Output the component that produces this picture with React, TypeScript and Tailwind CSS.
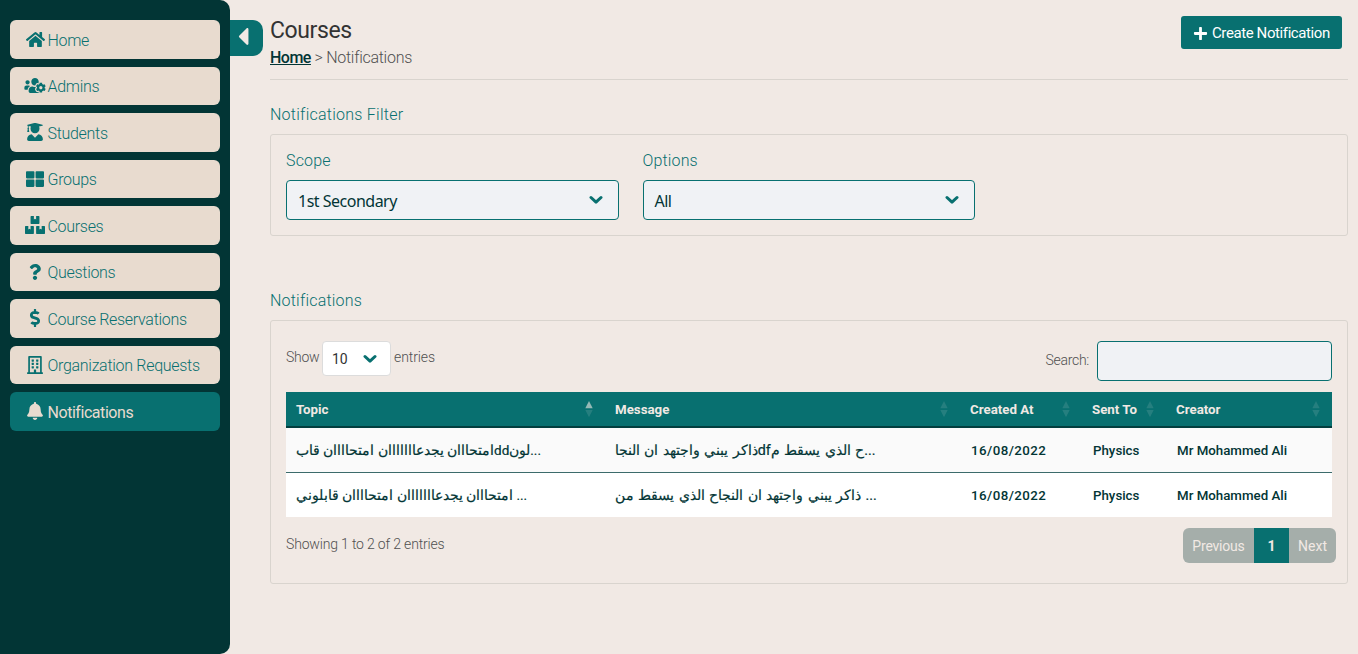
import { FaHome, FaUsersCog, FaUserGraduate, FaThLarge, FaBoxes, FaQuestion, FaDollarSign, FaRegBuilding, FaBell, FaCaretLeft, FaPlus } from "react-icons/fa";

const nav = [
  { label: "Home", icon: <FaHome className="size-[19px]" /> },
  { label: "Admins", icon: <FaUsersCog className="h-[17px] w-[22px]" /> },
  { label: "Students", icon: <FaUserGraduate className="h-[18px] w-4" /> },
  { label: "Groups", icon: <FaThLarge className="size-[18px]" /> },
  { label: "Courses", icon: <FaBoxes className="h-[18px] w-5" /> },
  { label: "Questions", icon: <FaQuestion className="h-[18px] w-3" /> },
  { label: "Course Reservations", icon: <FaDollarSign className="h-[18px] w-3" /> },
  { label: "Organization Requests", icon: <FaRegBuilding className="h-[18px] w-4" /> },
  { label: "Notifications", icon: <FaBell className="h-[18px] w-4" />, active: true },
];

function Chevron() {
  return (
    <svg viewBox="0 0 14 10" className="h-[10px] w-[14px]" fill="none" stroke="#087070" strokeWidth="3" strokeLinecap="round" strokeLinejoin="round">
      <path d="M2 2.5 7 7.2 12 2.5" />
    </svg>
  );
}

function SortArrows({ ascending = false }: { ascending?: boolean }) {
  return (
    <svg viewBox="0 0 8 18" className="h-[18px] w-2" fill="#f1e9e4">
      <path d="M4 1 7.7 8.2H.3Z" opacity={ascending ? 0.6 : 0.125} />
      <path d="M4 17.2 7.7 10H.3Z" opacity="0.125" />
    </svg>
  );
}

function Field({ label, value }: { label: string; value: string }) {
  return (
    <div className="w-[332.5px]">
      <div className="h-[31px] text-base leading-6 font-light tracking-[0.15px] text-[#087070]">{label}</div>
      <div className="flex h-10 items-center justify-between rounded border border-[#087070] bg-[#f0f2f5] pr-[15px] pl-[11px] font-['Noto_Sans',sans-serif] text-base tracking-[-0.5px] text-[#023535]">
        <span className="pt-[1px]">{value}</span>
        <Chevron />
      </div>
    </div>
  );
}

const columns = ["Topic", "Message", "Created At", "Sent To", "Creator"];
const exam = `امتحااان يجدع${"ا".repeat(7)}ن امتحاااان`;
const rows = [
  [`${exam} قابddلون...`, "ذاكر يبني واجتهد ان النجاdfح الذي يسقط م...", "16/08/2022", "Physics", "Mr Mohammed Ali"],
  [`${exam} قابلوني ...`, "ذاكر يبني واجتهد ان النجاح الذي يسقط من ...", "16/08/2022", "Physics", "Mr Mohammed Ali"],
];
const cellStyles = [
  "text-[13.5px] font-normal [-webkit-text-stroke:0.2px]",
  "text-[14.3px] leading-4 pb-[2px] font-normal [word-spacing:0.9px] [-webkit-text-stroke:0.2px]",
  "pl-[1px] tracking-[0.45px]",
  "pl-[1px]",
  "pl-[1px]",
];
const grid = "grid grid-cols-[319px_355px_122px_84px_166px]";

export default function App() {
  return (
    <div className="flex h-[654px] w-[1358px] overflow-hidden bg-[#f1e9e4] font-['Roboto',sans-serif] text-[#505050]">
      <aside className="flex w-[230px] shrink-0 flex-col gap-2 rounded-r-[10px] bg-[#023535] px-[10px] pt-5">
        {nav.map((n) => (
          <div
            key={n.label}
            className={
              n.active
                ? "flex h-[38.5px] items-center rounded-md bg-[#087070] pl-[14px] text-base tracking-[-0.45px] text-[#e8dbcf]"
                : "flex h-[38.5px] items-center rounded-md bg-[#e8dbcf] pl-[14px] text-base font-light tracking-[-0.3px] text-[#087070]"
            }
          >
            <div className="flex w-[22px] justify-center">{n.icon}</div>
            <span className="ml-[1.5px] pt-[3px]">{n.label}</span>
          </div>
        ))}
      </aside>
      <div className="mt-5 flex h-9 w-[33px] shrink-0 items-center rounded-r-[10px] bg-[#087070] pl-[7px] text-[#f1e9e4]">
        <FaCaretLeft className="-mt-[3px] h-[29px] w-3" />
      </div>
      <main className="ml-[7px] w-[1078px]">
        <header className="flex h-20 justify-between border-b border-[#d9d4ce] pt-4 pr-[6px]">
          <div>
            <h1 className="pt-[1px] text-[23px] leading-7 tracking-[-0.4px] text-[#333]">Courses</h1>
            <p className="pt-[1px] text-base leading-6 font-light tracking-[-0.28px]">
              <span className="font-medium tracking-[-0.5px] text-[#023535] underline">Home</span> &gt; Notifications
            </p>
          </div>
          <button className="flex h-[33px] w-[161px] items-center rounded-[3px] bg-[#087070] pt-[1px] pl-3 text-[15px] tracking-[-0.4px] whitespace-nowrap text-white">
            <FaPlus className="mr-1 size-[15px] shrink-0" />
            Create Notification
          </button>
        </header>
        <h2 className="mt-[23px] h-[31px] text-base leading-6 font-light tracking-[0.25px] text-[#087070]">Notifications Filter</h2>
        <section className="flex h-[102px] gap-6 rounded-[3px] border border-[#d9d4ce] px-[15px] pt-[14px]">
          <Field label="Scope" value="1st Secondary" />
          <Field label="Options" value="All" />
        </section>
        <h2 className="mt-[53px] h-[31px] text-base leading-6 font-light tracking-[0.2px] text-[#087070]">Notifications</h2>
        <section className="h-[264px] rounded-[3px] border border-[#d9d4ce] px-[15px] pt-5 text-sm">
          <div className="flex h-[51px] items-start justify-between">
            <div className="flex items-center font-light">
              <span className="w-[33px] pb-[3px] tracking-[-0.3px]">Show</span>
              <div className="mx-[3px] flex h-[35px] w-[69px] items-center justify-between rounded border border-[#dcdcdc] bg-white pr-[13px] pl-[9px] font-normal text-[#333]">
                <span>10</span>
                <Chevron />
              </div>
              <span className="pb-[3px] tracking-[-0.1px]">entries</span>
            </div>
            <div className="flex items-center gap-2 font-light">
              <span className="pb-[2px] tracking-[-0.28px]">Search:</span>
              <input className="h-10 w-[235px] rounded border border-[#087070] bg-[#f0f2f5]" />
            </div>
          </div>
          <div className={`${grid} h-9 border-b-2 border-[#023f3f] bg-[#087070] text-[13.3px] font-bold text-[#f1e9e4]`}>
            {columns.map((c, i) => (
              <div key={c} className="flex items-center justify-between pr-3 pl-[10px]">
                <span className="pt-[2px]">{c}</span>
                <SortArrows ascending={i === 0} />
              </div>
            ))}
          </div>
          {rows.map((r, i) => (
            <div
              key={i}
              className={
                i === 0
                  ? `${grid} h-[45px] border-b border-[#3c6b6b] bg-[#fafafa] text-[13.3px] font-medium text-[#023535]`
                  : `${grid} h-11 bg-white text-[13.3px] font-medium text-[#023535]`
              }
            >
              {r.map((c, j) => (
                <div key={j} className="flex items-center pt-[2px] pl-[10px]">
                  <span className={cellStyles[j]}>{c}</span>
                </div>
              ))}
            </div>
          ))}
          <div className="flex justify-between">
            <p className="pt-[17px] font-light tracking-[-0.17px]">Showing 1 to 2 of 2 entries</p>
            <div className="mt-[11px] -mr-1 flex h-[35px] overflow-hidden rounded-md bg-[#a5aeaa] leading-[36px] text-[#f1e9e4]">
              <div className="w-[71px] text-center tracking-[-0.2px]">Previous</div>
              <div className="w-[35px] bg-[#087070] text-center font-bold">1</div>
              <div className="w-[47px] text-center">Next</div>
            </div>
          </div>
        </section>
      </main>
    </div>
  );
}
